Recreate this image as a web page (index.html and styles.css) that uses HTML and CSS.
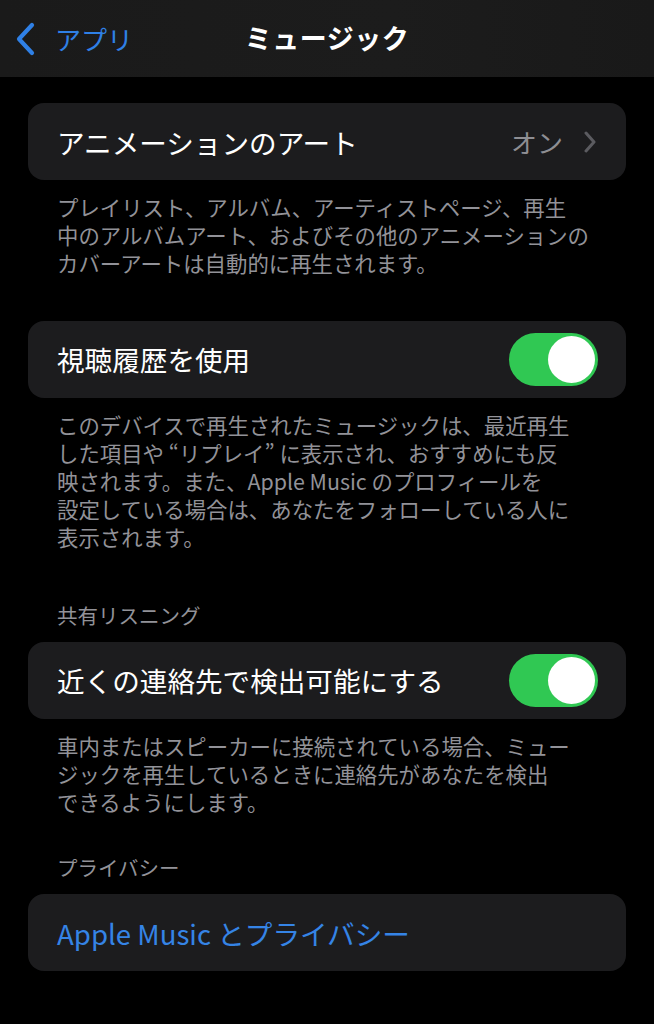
FILE: index.html
```html
<!DOCTYPE html>
<html lang="ja">
<head>
<meta charset="utf-8">
<link rel="stylesheet" href="styles.css">
</head>
<body>
<header class="nav">
  <div class="back">
    <svg class="back-chev" width="24" height="34" viewBox="0 0 24 34"><path d="M18 3 L5 17 L18 31" fill="none" stroke="#2f80e6" stroke-width="4.2" stroke-linecap="round" stroke-linejoin="round"/></svg>
    <span class="back-label">アプリ</span>
  </div>
  <div class="title">ミュージック</div>
</header>
<main class="content">
  <section class="group g1">
    <div class="card">
      <span class="label">アニメーションのアート</span>
      <span class="value">オン<svg class="chev" width="14" height="22" viewBox="0 0 14 22"><path d="M3 2 L11 11 L3 20" fill="none" stroke="#5b5b60" stroke-width="3" stroke-linecap="round" stroke-linejoin="round"/></svg></span>
    </div>
    <p class="footer">プレイリスト、アルバム、アーティストページ、再生<br>中のアルバムアート、およびその他のアニメーションの<br>カバーアートは自動的に再生されます。</p>
  </section>
  <section class="group g2">
    <div class="card">
      <span class="label">視聴履歴を使用</span>
      <span class="toggle"><span class="knob"></span></span>
    </div>
    <p class="footer">このデバイスで再生されたミュージックは、最近再生<br>した項目や “リプレイ” に表示され、おすすめにも反<br>映されます。また、Apple Music のプロフィールを<br>設定している場合は、あなたをフォローしている人に<br>表示されます。</p>
  </section>
  <section class="group g3">
    <h2 class="head">共有リスニング</h2>
    <div class="card">
      <span class="label">近くの連絡先で検出可能にする</span>
      <span class="toggle"><span class="knob"></span></span>
    </div>
    <p class="footer">車内またはスピーカーに接続されている場合、ミュー<br>ジックを再生しているときに連絡先があなたを検出<br>できるようにします。</p>
  </section>
  <section class="group g4">
    <h2 class="head">プライバシー</h2>
    <div class="card">
      <span class="label link">Apple Music とプライバシー</span>
    </div>
  </section>
</main>
</body>
</html>
```
FILE: styles.css
```css
html, body {
  margin: 0;
  padding: 0;
  background: #000;
}
body {
  width: 654px;
  height: 1024px;
  overflow: hidden;
  font-family: "Noto Sans CJK JP", "Noto Sans", sans-serif;
  color: #fff;
}
.nav {
  height: 77px;
  background: linear-gradient(90deg, #1a1a1a 0%, #1c1c1c 60%, #191919 100%);
  position: relative;
  display: flex;
  align-items: center;
  justify-content: center;
}
.back {
  position: absolute;
  left: 14px;
  top: 22px;
  display: flex;
  align-items: center;
  gap: 17px;
}
.back-label {
  color: #2f80e6;
  font-size: 26px;
  line-height: 34px;
}
.title {
  font-size: 27px;
  font-weight: 700;
  letter-spacing: 0.5px;
  line-height: 34px;
  margin-top: -2px;
}
.content {
  padding: 0 28px;
}
.group { margin: 0; }
.g1 { padding-top: 26px; }
.g2 { padding-top: 43px; }
.g3 { padding-top: 49px; }
.g4 { padding-top: 37px; }
.card {
  background: #1c1c1e;
  border-radius: 16px;
  height: 77px;
  padding: 0 28px 0 29px;
  display: flex;
  align-items: center;
  justify-content: space-between;
}
.label {
  font-size: 27.6px;
  line-height: 34px;
  color: #fff;
}
.link { color: #3584e6; }
.value {
  display: flex;
  align-items: center;
  gap: 20px;
  font-size: 26px;
  color: #8e8e93;
  line-height: 34px;
}
.chev { margin-right: 1px; }
.toggle {
  width: 89px;
  height: 53px;
  border-radius: 27px;
  background: #30c853;
  display: flex;
  align-items: center;
  justify-content: flex-end;
  padding: 0 3px;
  box-sizing: border-box;
  margin-right: 0;
}
.knob {
  width: 47px;
  height: 47px;
  border-radius: 50%;
  background: #fff;
}
.footer {
  margin: 13px 0 0;
  padding-left: 29px;
  font-size: 21.4px;
  line-height: 28.2px;
  color: #929298;
  white-space: nowrap;
}
.head {
  margin: 0 0 13px;
  padding-left: 29px;
  font-size: 20.5px;
  font-weight: 400;
  line-height: 28px;
  color: #929298;
}
```
